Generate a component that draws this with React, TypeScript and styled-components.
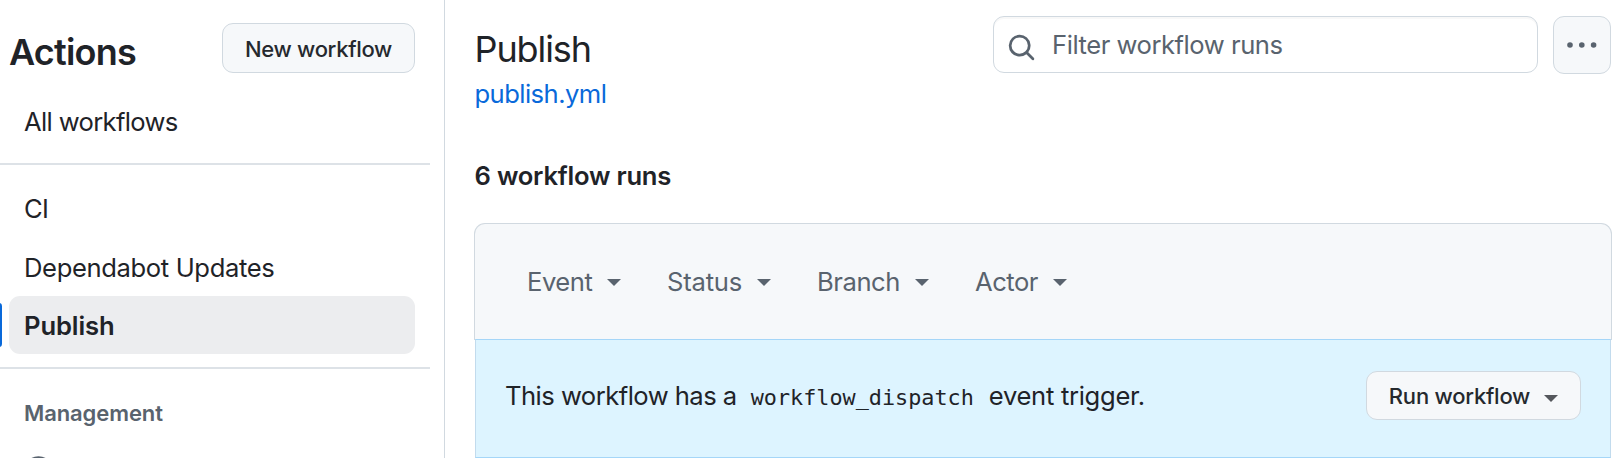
import React from "react";
import styled, { createGlobalStyle } from "styled-components";

const GlobalStyle = createGlobalStyle`
  * { box-sizing: border-box; }
  body {
    margin: 0;
    background: #ffffff;
    color: #1f2328;
    font-family: Inter, "Liberation Sans", sans-serif;
    font-size: 25.6px;
    -webkit-font-smoothing: antialiased;
  }
  h1, h2, p, ul { margin: 0; padding: 0; }
  button { font-family: inherit; color: inherit; }
`;

const Page = styled.div`
  display: flex;
  width: 1620px;
  height: 458px;
  overflow: hidden;
`;

const Sidebar = styled.aside`
  width: 445px;
  flex: none;
  border-right: 1px solid #d1d9e0;
`;

const SidebarHeader = styled.header`
  display: flex;
  justify-content: space-between;
  align-items: flex-start;
  height: 92px;
  padding: 23px 29px 0 9px;
`;

const SidebarTitle = styled.h1`
  font-size: 36px;
  line-height: 58px;
  font-weight: 600;
  letter-spacing: -0.8px;
`;

const Button = styled.button<{ $width: number; $height: number }>`
  display: flex;
  align-items: center;
  justify-content: center;
  flex: none;
  width: ${(p) => p.$width}px;
  height: ${(p) => p.$height}px;
  padding: 1px 0 0;
  border: 1px solid #d1d9e0;
  border-radius: 11px;
  background: #f6f8fa;
  color: #25292e;
  font-size: 22px;
  font-weight: 500;
  letter-spacing: -0.3px;
  white-space: nowrap;
`;

const RunButton = styled(Button)`
  letter-spacing: -0.22px;
`;

const MoreButton = styled(Button)`
  padding: 0 1px 1px 0;
`;

const NavList = styled.ul`
  list-style: none;
`;

const NavItem = styled.li<{ $active?: boolean; $spacing: number }>`
  position: relative;
  display: flex;
  align-items: center;
  height: 58px;
  margin: 0 29px 0 9px;
  padding-left: 15px;
  border-radius: 11px;
  background: ${(p) => (p.$active ? "#ecedef" : "transparent")};
  font-weight: ${(p) => (p.$active ? 600 : 400)};
  letter-spacing: ${(p) => p.$spacing}px;
  & + & { margin-top: 1px; }
  & + & + & { margin-top: 0; }
`;

const ActiveMarker = styled.span`
  position: absolute;
  left: -13px;
  top: 7px;
  width: 6px;
  height: 44px;
  border-radius: 4px;
  background: #0969da;
`;

const Divider = styled.div<{ $before: number; $after: number }>`
  height: 2px;
  margin: ${(p) => p.$before}px 14px ${(p) => p.$after}px 0;
  background: #dde2e7;
`;

const GroupLabel = styled.h2`
  padding-left: 24px;
  font-size: 22px;
  line-height: 30px;
  font-weight: 600;
  letter-spacing: -0.1px;
  color: #59636e;
`;

const NavIcon = styled.svg`
  display: block;
  margin: 28px 0 0 24px;
`;

const Main = styled.main`
  flex: 1;
  padding: 16px 8px 0 29px;
`;

const TopBar = styled.div`
  display: flex;
  justify-content: space-between;
  align-items: flex-start;
  height: 136px;
  padding-right: 1px;
`;

const WorkflowHeading = styled.div`
  padding-left: 0.5px;
`;

const WorkflowTitle = styled.h1`
  font-size: 36px;
  line-height: 44px;
  margin-top: 11px;
  font-weight: 400;
  letter-spacing: -1.1px;
`;

const FileLink = styled.a`
  display: block;
  margin-top: 7px;
  line-height: 32px;
  color: #0969da;
  letter-spacing: -0.55px;
`;

const Tools = styled.div`
  display: flex;
  gap: 15px;
`;

const SearchBox = styled.div`
  display: flex;
  align-items: flex-start;
  width: 545px;
  height: 57px;
  padding-left: 13px;
  border: 1px solid #d1d9e0;
  border-radius: 11px;
  box-shadow: inset 0 2px 0 rgba(31, 35, 40, 0.03);
  color: #59636e;
  line-height: 56px;
  letter-spacing: -0.46px;
`;

const SearchIcon = styled.svg`
  margin: 16px 16px 0 0;
`;

const RunCount = styled.h2`
  height: 71px;
  padding-left: 0.5px;
  line-height: 48px;
  font-size: 25.6px;
  font-weight: 600;
  letter-spacing: -0.22px;
`;

const FilterBar = styled.div`
  display: flex;
  align-items: center;
  height: 117px;
  padding: 0 0 1px 52px;
  border: 1px solid #d1d9e0;
  border-bottom: 0;
  border-radius: 11px 11px 0 0;
  background: #f6f8fa;
  color: #59636e;
`;

const Filter = styled.div<{ $width: number; $spacing: number }>`
  display: flex;
  align-items: center;
  width: ${(p) => p.$width}px;
  letter-spacing: ${(p) => p.$spacing}px;
`;

const Caret = styled.span<{ $gap: number; $drop: number; $color?: string }>`
  margin: ${(p) => p.$drop}px 0 0 ${(p) => p.$gap}px;
  border: 7px solid transparent;
  border-top-color: ${(p) => p.$color ?? "currentColor"};
  border-bottom: 0;
`;

const Notice = styled.div`
  display: flex;
  align-items: center;
  justify-content: space-between;
  height: 119px;
  margin: -1px 1px 0;
  padding: 0 29px 6px 29px;
  border: 1px solid #a5d6f8;
  border-left-color: #c2dbed;
  border-right-color: #c2dbed;
  background: #ddf4ff;
`;

const NoticeText = styled.p`
  display: flex;
  align-items: baseline;
  white-space: nowrap;
  letter-spacing: -0.53px;
`;

const Code = styled.code`
  margin: 0 15px 0 14px;
  font-family: "DejaVu Sans Mono", monospace;
  font-size: 21.8px;
  letter-spacing: 0;
`;

const NoticeTail = styled.span`
  letter-spacing: -0.3px;
`;

const filters = [
  { label: "Event", width: 140, spacing: -0.45 },
  { label: "Status", width: 150, spacing: -0.2 },
  { label: "Branch", width: 158, spacing: -0.45 },
  { label: "Actor", width: 110, spacing: -0.5 },
];

export default function App() {
  return (
    <>
      <GlobalStyle />
      <Page>
        <Sidebar>
          <SidebarHeader>
            <SidebarTitle>Actions</SidebarTitle>
            <Button $width={193} $height={50}>New workflow</Button>
          </SidebarHeader>
          <NavList>
            <NavItem $spacing={-0.65}>All workflows</NavItem>
          </NavList>
          <Divider $before={13} $after={14} />
          <NavList>
            <NavItem $spacing={-0.65}>CI</NavItem>
            <NavItem $spacing={-0.37}>Dependabot Updates</NavItem>
            <NavItem $active $spacing={-0.1}>
              <ActiveMarker />
              Publish
            </NavItem>
          </NavList>
          <Divider $before={13} $after={29} />
          <GroupLabel>Management</GroupLabel>
          <NavIcon width="29" height="29" viewBox="0 0 29 29" fill="none" stroke="#59636e" strokeWidth="2.7">
            <circle cx="14.5" cy="14.5" r="13" />
          </NavIcon>
        </Sidebar>
        <Main>
          <TopBar>
            <WorkflowHeading>
              <WorkflowTitle>Publish</WorkflowTitle>
              <FileLink>publish.yml</FileLink>
            </WorkflowHeading>
            <Tools>
              <SearchBox>
                <SearchIcon width="29" height="29" viewBox="0 0 16 16" fill="#59636e">
                  <path d="M10.68 11.74a6 6 0 0 1-7.922-8.982 6 6 0 0 1 8.982 7.922l3.04 3.04a.749.749 0 0 1-.326 1.275.749.749 0 0 1-.734-.215ZM11.5 7a4.499 4.499 0 1 0-8.997 0A4.499 4.499 0 0 0 11.5 7Z" />
                </SearchIcon>
                Filter workflow runs
              </SearchBox>
              <MoreButton $width={58} $height={58} aria-label="More options">
                <svg width="32" height="8" viewBox="0 0 32 8" fill="#59636e">
                  <circle cx="4" cy="4" r="2.8" />
                  <circle cx="15.8" cy="4" r="2.8" />
                  <circle cx="27.6" cy="4" r="2.8" />
                </svg>
              </MoreButton>
            </Tools>
          </TopBar>
          <RunCount>6 workflow runs</RunCount>
          <FilterBar>
            {filters.map((f) => (
              <Filter key={f.label} $width={f.width} $spacing={f.spacing}>
                {f.label}
                <Caret $gap={15} $drop={2} />
              </Filter>
            ))}
          </FilterBar>
          <Notice>
            <NoticeText>
              This workflow has a<Code>workflow_dispatch</Code>
              <NoticeTail>event trigger.</NoticeTail>
            </NoticeText>
            <RunButton $width={215} $height={49}>
              Run workflow
              <Caret $gap={14} $drop={4} $color="#54575c" />
            </RunButton>
          </Notice>
        </Main>
      </Page>
    </>
  );
}
